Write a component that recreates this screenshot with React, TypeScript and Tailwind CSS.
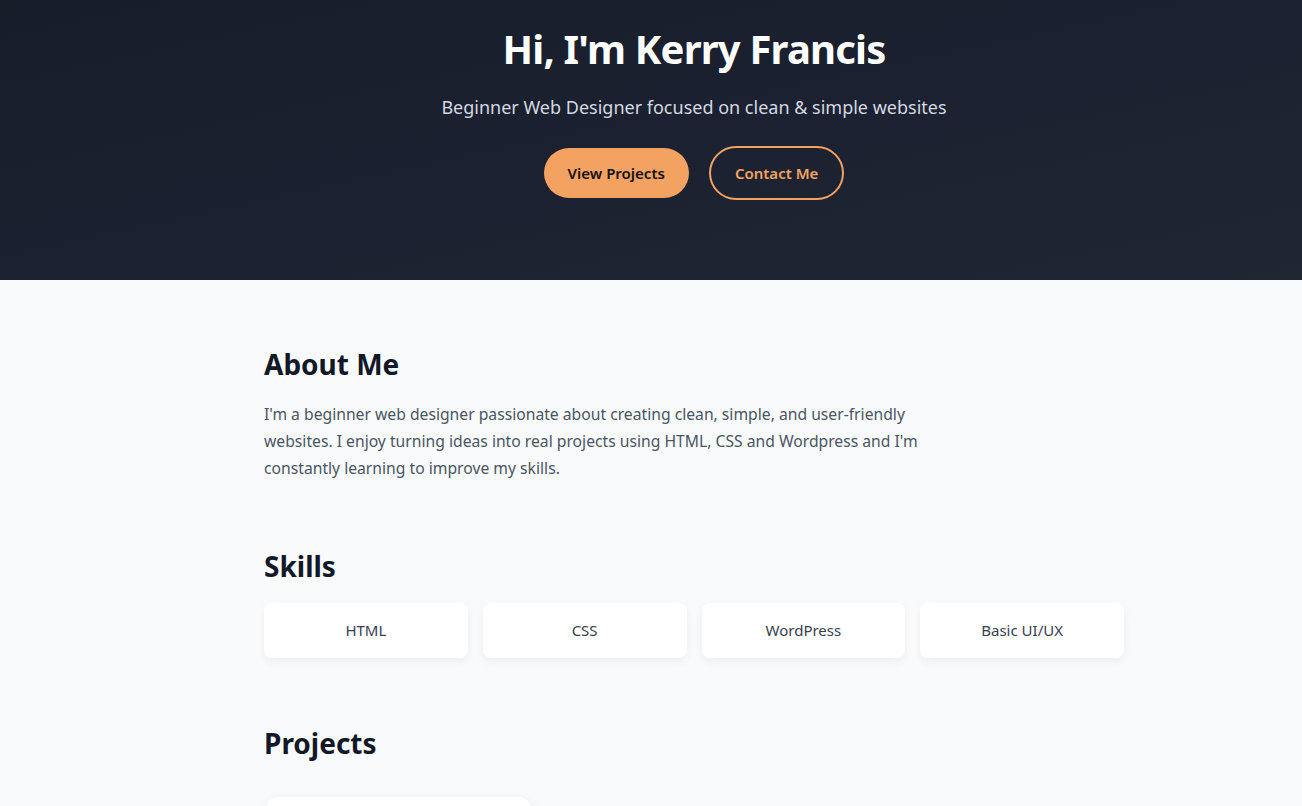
import * as React from 'react'

const skills = ['HTML', 'CSS', 'WordPress', 'Basic UI/UX']

function Hero() {
  return (
    <header className="h-[280px] bg-gradient-to-br from-[#171d29] via-[#1b2130] to-[#1f2733] pl-[264px] pr-[178px] pt-[25px]">
      <div className="flex flex-col items-center text-center">
        <h1 className="text-[40px] leading-[1.2] font-bold tracking-[-0.02em] text-white">Hi, I'm Kerry Francis</h1>
        <p className="mt-[22px] text-[18px] leading-[1.4] text-[#d4d8e0]">
          Beginner Web Designer focused on clean &amp; simple websites
        </p>
        <div className="mt-[26px] flex items-center gap-5">
          <a className="h-[50px] px-6 rounded-full bg-[#f4a261] text-[#111] text-[15px] font-semibold flex items-center">
            View Projects
          </a>
          <a className="h-[54px] px-6 rounded-full border-2 border-[#f4a261] text-[#f4a261] text-[15px] font-semibold flex items-center">
            Contact Me
          </a>
        </div>
      </div>
    </header>
  )
}

export default function App() {
  return (
    <div className="min-h-screen bg-[#f8fafc] font-['Segoe_UI','Noto_Sans',sans-serif] overflow-hidden">
      <Hero />
      <main className="pl-[264px] pr-[178px] pt-[68px]">
        <section>
          <h2 className="text-[28px] leading-[1.2] font-bold text-[#111827]">About Me</h2>
          <p className="mt-[19px] max-w-[700px] text-[15.7px] leading-[27.2px] text-[#4b5563]">
            I'm a beginner web designer passionate about creating clean, simple, and user-friendly websites. I enjoy
            turning ideas into real projects using HTML, CSS and Wordpress and I'm constantly learning to improve my
            skills.
          </p>
        </section>

        <section className="mt-[68px]">
          <h2 className="text-[28px] leading-[1.2] font-bold text-[#111827]">Skills</h2>
          <div className="mt-[19px] grid grid-cols-4 gap-[15px]">
            {skills.map((s) => (
              <div
                key={s}
                className="h-[55px] rounded-lg bg-white shadow-[0_4px_10px_rgba(0,0,0,0.05)] flex items-center justify-center text-[15px] text-[#374151]"
              >
                {s}
              </div>
            ))}
          </div>
        </section>

        <section className="mt-[69px]">
          <h2 className="text-[28px] leading-[1.2] font-bold text-[#111827]">Projects</h2>
          <div className="mt-[37px] grid grid-cols-3 gap-[30px]">
            <div className="h-[220px] ml-[2px] rounded-xl bg-white shadow-[0_4px_14px_rgba(0,0,0,0.06)]" />
          </div>
        </section>
      </main>
    </div>
  )
}
